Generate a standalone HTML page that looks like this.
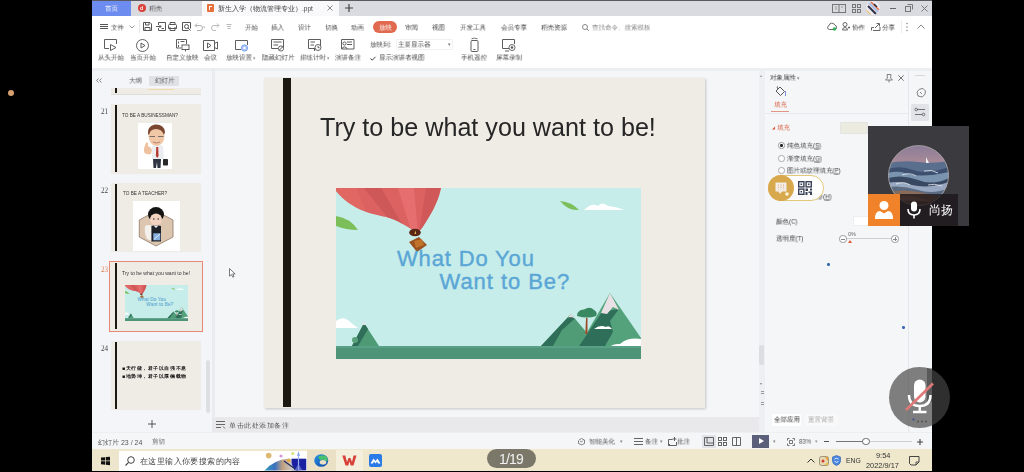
<!DOCTYPE html>
<html><head><meta charset="utf-8">
<style>
*{margin:0;padding:0;box-sizing:border-box}
html,body{width:1024px;height:472px;overflow:hidden;background:#000;font-family:"Liberation Sans",sans-serif;position:relative}
.a{position:absolute}
.t{will-change:transform;position:absolute;white-space:nowrap;line-height:1;color:#444;font-size:6.5px;transform:translateY(-50%)}
svg{position:absolute;overflow:visible}
.s{transform-origin:0 50%;transform:translateY(-50%) scale(0.93)}
.ic{fill:none;stroke:#5e5e5e;stroke-width:1}
</style></head><body>
<div class="a" style="left:8px;top:89.5px;width:6px;height:6px;border-radius:50%;background:#d8a070"></div>

<!-- APP BG -->
<div class="a" style="left:92px;top:0;width:840px;height:470px;background:#f5f6f8"></div>

<!-- ===== TAB BAR ===== -->
<div class="a" style="left:92px;top:0;width:840px;height:16px;background:#dadbe0"></div>
<div class="a" style="left:92px;top:0;width:840px;height:1px;background:#5a5a5e"></div>
<div class="a" style="left:92px;top:1px;width:39px;height:15px;background:#6d8cef"></div>
<div class="t s" style="left:105px;top:9px;color:#fff">首页</div>
<div class="a" style="left:138px;top:4px;width:8px;height:8px;border-radius:50%;background:#d8403a"></div>
<div class="t" style="left:140px;top:8px;color:#fff;font-size:5px;font-weight:bold">d</div>
<div class="t s" style="left:149px;top:9px;color:#555">稻壳</div>
<div class="a" style="left:202px;top:1px;width:137px;height:15px;background:#f9f9fb"></div>
<div class="a" style="left:207px;top:4px;width:7px;height:8px;border-radius:1px;background:#e8703a"></div>
<div class="a" style="left:209px;top:6px;width:3px;height:4px;border-left:1px solid #fff;border-top:1px solid #fff"></div>
<div class="t" style="left:218px;top:9px;color:#444">新生入学（物流管理专业）.ppt</div>
<svg style="left:327px;top:5px" width="6" height="6"><path class="ic" d="M0.5,0.5L5.5,5.5M5.5,0.5L0.5,5.5" style="stroke:#888"/></svg>
<svg style="left:345px;top:4px" width="8" height="8"><path class="ic" d="M4,0V8M0,4H8" style="stroke:#444;stroke-width:1.2"/></svg>
<!-- right window icons -->
<svg style="left:832px;top:4px" width="14" height="9"><rect x="0.5" y="0.5" width="13" height="8" class="ic" style="stroke:#777"/><path class="ic" d="M7,1V8" style="stroke:#777"/><path d="M3,3h2M3,5h2M9,3h2" class="ic" style="stroke:#999"/></svg>
<svg style="left:852px;top:4px" width="9" height="9"><rect x="0.5" y="0.5" width="3" height="3" class="ic" style="stroke:#777"/><rect x="5.5" y="0.5" width="3" height="3" class="ic" style="stroke:#777"/><rect x="0.5" y="5.5" width="3" height="3" class="ic" style="stroke:#777"/><rect x="5.5" y="5.5" width="3" height="3" class="ic" style="stroke:#777"/></svg>
<svg style="left:866px;top:1px" width="14" height="14"><defs><clipPath id="avc"><circle cx="7" cy="7" r="7"/></clipPath></defs><g clip-path="url(#avc)"><rect width="14" height="14" fill="#eceaf0"/><path d="M3,2L12,11" stroke="#a8c0e8" stroke-width="2"/><path d="M5,1L13,9" stroke="#e07050" stroke-width="1.6"/><path d="M2,5L10,13" stroke="#303040" stroke-width="2"/><path d="M8,3L11,6" stroke="#2a2a3a" stroke-width="1.5"/><path d="M0,9L5,14" stroke="#e8c070" stroke-width="1.5"/></g></svg>
<div class="a" style="left:890px;top:8px;width:6px;height:1px;background:#666"></div>
<svg style="left:905px;top:4px" width="8" height="8"><rect x="0.5" y="2.5" width="5" height="5" class="ic" style="stroke:#777"/><path class="ic" d="M2.5,0.5H7.5V5.5" style="stroke:#777"/></svg>
<svg style="left:921px;top:5px" width="7" height="7"><path class="ic" d="M0.5,0.5L6.5,6.5M6.5,0.5L0.5,6.5" style="stroke:#777"/></svg>

<!-- ===== MENU ROW ===== -->
<div class="a" style="left:92px;top:16px;width:840px;height:52px;background:#fff"></div>
<svg style="left:100px;top:24px" width="8" height="6"><path class="ic" d="M0,0.5H8M0,2.5H8M0,4.5H8" style="stroke:#555"/></svg>
<div class="t s" style="left:111px;top:27.5px">文件</div>
<svg style="left:129px;top:25px" width="6" height="4"><path class="ic" d="M0.5,0.5L3,3L5.5,0.5" style="stroke:#999"/></svg>
<div class="a" style="left:139px;top:20px;width:1px;height:13px;background:#e6e6e6"></div>
<svg style="left:143px;top:22px" width="9" height="9"><path class="ic" d="M0.5,0.5H7L8.5,2V8.5H0.5Z M2.5,0.5V3H6V0.5 M2,8.5V5.5H7V8.5" style="stroke:#555"/></svg>
<svg style="left:156px;top:22px" width="10" height="9"><path class="ic" d="M2.5,3V0.5H9.5V8.5H2.5V6 M0,4.5H5M3.5,3L5,4.5L3.5,6 M5.5,6.5H8" style="stroke:#555"/></svg>
<svg style="left:168px;top:22px" width="9" height="9"><path class="ic" d="M2,2.5V0.5H7V2.5 M1.5,2.5H7.5Q8.5,2.5 8.5,3.5V6.5H0.5V3.5Q0.5,2.5 1.5,2.5Z M2,5V8.5H7V5" style="stroke:#555"/></svg>
<svg style="left:182px;top:22px" width="9" height="9"><path class="ic" d="M6.5,8.5H0.5V0.5H8.5V6.5 M6,6L8.5,8.5" style="stroke:#555"/><circle cx="4.5" cy="4.5" r="2" class="ic" style="stroke:#555"/></svg>
<svg style="left:194px;top:22px" width="14" height="9"><path class="ic" d="M1.5,3.5H6A2.5,2.5 0 0 1 6,8.5H3 M3,1.5L1,3.5L3,5.5" style="stroke:#b0b0b0"/><path class="ic" d="M9.5,5H11" style="stroke:#999"/></svg>
<svg style="left:211px;top:22px" width="9" height="9"><path class="ic" d="M7.5,3.5H3A2.5,2.5 0 0 0 3,8.5H5 M6,1.5L8,3.5L6,5.5" style="stroke:#b8b8b8"/></svg>
<svg style="left:226px;top:23px" width="6" height="7"><path class="ic" d="M0.5,1.5H5.5M1,3.5H5M1.5,5.5H4.5" style="stroke:#bbb"/></svg>

<div class="t s" style="left:244.5px;top:27.5px">开始</div>
<div class="t s" style="left:271px;top:27.5px">插入</div>
<div class="t s" style="left:298px;top:27.5px">设计</div>
<div class="t s" style="left:325px;top:27.5px">切换</div>
<div class="t s" style="left:351px;top:27.5px">动画</div>
<div class="a" style="left:373px;top:20.5px;width:24px;height:12px;border-radius:6px;background:#e0694e"></div>
<div class="t s" style="left:378.5px;top:27.5px;color:#fff">放映</div>
<div class="t s" style="left:405px;top:27.5px">审阅</div>
<div class="t s" style="left:431.5px;top:27.5px">视图</div>
<div class="t s" style="left:459.5px;top:27.5px">开发工具</div>
<div class="t s" style="left:501px;top:27.5px">会员专享</div>
<div class="t s" style="left:541px;top:27.5px">稻壳资源</div>
<svg style="left:582px;top:23.5px" width="7" height="7"><circle cx="3" cy="3" r="2.5" class="ic" style="stroke:#888"/><path class="ic" d="M5,5L6.8,6.8" style="stroke:#888"/></svg>
<div class="t s" style="left:591.5px;top:27.5px;color:#888">查找命令、搜索模板</div>

<svg style="left:827px;top:22px" width="10" height="9"><path class="ic" d="M2.5,7.5A2,2 0 0 1 2,3.6A3,3 0 0 1 7.8,3.2A2.2,2.2 0 0 1 8,7.5Z" style="stroke:#666"/><circle cx="7.5" cy="7" r="1.8" fill="#36b05a"/></svg>
<svg style="left:842px;top:22px" width="8" height="9"><circle cx="3" cy="2.5" r="2" class="ic" style="stroke:#666"/><path class="ic" d="M0.5,8A2.5,2.5 0 0 1 5.5,8Z M6,5.5H8M7,4.5V6.5" style="stroke:#666"/></svg>
<div class="t s" style="left:852px;top:27.5px;color:#444">协作</div>
<svg style="left:871px;top:22px" width="10" height="9"><path class="ic" d="M0.5,8.5V5.5H3 M2,8.5H9V5 M4,6L8,2 M5.5,1.5H8.5V4.5" style="stroke:#666"/></svg>
<div class="t s" style="left:882px;top:27.5px;color:#444">分享</div>
<div class="a" style="left:901px;top:20px;width:1px;height:13px;background:#ececec"></div>
<svg style="left:906px;top:22px" width="2" height="10"><circle cx="1" cy="1.5" r="0.7" fill="#777"/><circle cx="1" cy="5" r="0.7" fill="#777"/><circle cx="1" cy="8.5" r="0.7" fill="#777"/></svg>
<svg style="left:917px;top:24px" width="8" height="5"><path class="ic" d="M0.5,4.5L4,1L7.5,4.5" style="stroke:#888"/></svg>

<!-- ===== RIBBON ===== -->
<!-- 从头开始 -->
<svg style="left:104px;top:39px" width="14" height="12"><path class="ic" d="M5,9.5H0.5V0.5H12.5V5" /><path class="ic" d="M6.5,5.5V11.5L12,8.5Z"/><path class="ic" d="M2.5,9.5H4.5" /></svg>
<div class="t s" style="left:98px;top:58.3px">从头开始</div>
<!-- 当页开始 -->
<svg style="left:136px;top:38.5px" width="13" height="13"><circle cx="6.5" cy="6.5" r="6" class="ic"/><path class="ic" d="M5,4V9L9,6.5Z"/></svg>
<div class="t s" style="left:129.5px;top:58.3px">当页开始</div>
<!-- 自定义放映 -->
<svg style="left:175.5px;top:39px" width="14" height="13"><path class="ic" d="M5,9H0.5V0.5H10.5V5 M2.5,2.5V4.5M2.5,6V8 M4.5,2.5H8.5"/><rect x="6" y="6" width="7" height="4.5" class="ic"/><path class="ic" d="M9.5,10.5V12.5"/></svg>
<div class="t s" style="left:165.5px;top:58.3px">自定义放映</div>
<!-- 会议 -->
<svg style="left:203px;top:40px" width="15" height="11"><path class="ic" d="M0.5,0.5H11.5V10.5H0.5Z M11.5,3.5L14.5,2V9L11.5,7.5"/><path class="ic" d="M4.5,3V8L8,5.5Z"/></svg>
<div class="t s" style="left:203.5px;top:58.3px">会议</div>
<!-- 放映设置 -->
<svg style="left:234.5px;top:39.5px" width="14" height="13"><path class="ic" d="M6,9.5H0.5V0.5H12.5V5"/><circle cx="9.5" cy="8" r="3.2" fill="#a8c4f4" stroke="#6a96e8" stroke-width="0.7"/><circle cx="9.5" cy="8" r="1.2" fill="#fff"/></svg>
<div class="t s" style="left:226px;top:58.3px">放映设置<span style="font-size:5px;color:#888"> ▾</span></div>
<!-- 隐藏幻灯片 -->
<svg style="left:270.5px;top:38.5px" width="14" height="13"><path class="ic" d="M0.5,0.5H12.5V9.5H0.5Z M2.5,3H10.5 M2.5,6H7"/><circle cx="10" cy="9.5" r="2.6" fill="#fff" stroke="#555" stroke-width="0.9"/><path class="ic" d="M8.3,11.2L11.7,7.8"/></svg>
<div class="t s" style="left:261.5px;top:58.3px">隐藏幻灯片</div>
<!-- 排练计时 -->
<svg style="left:308px;top:38.5px" width="14" height="13"><path class="ic" d="M0.5,0.5H12.5V9.5H0.5Z M2.5,3H7 M2.5,6H6 M6.5,9.5V12"/><circle cx="10" cy="8.5" r="3" fill="#fff" stroke="#555" stroke-width="0.9"/><path class="ic" d="M10,7V8.7H11.5"/></svg>
<div class="t s" style="left:299.5px;top:58.3px">排练计时<span style="font-size:5px;color:#888"> ▾</span></div>
<!-- 演讲备注 -->
<svg style="left:341px;top:38.5px" width="14" height="13"><path class="ic" d="M0.5,0.5H13V10H0.5Z M6,3H11M6,5.5H11"/><circle cx="3.5" cy="4.5" r="1.6" class="ic"/><path class="ic" d="M0.8,10A2.8,2.8 0 0 1 6.2,10"/></svg>
<div class="t s" style="left:335px;top:58.3px">演讲备注</div>
<!-- 放映到 -->
<div class="t s" style="left:369.5px;top:44.5px">放映到:</div>
<div class="a" style="left:396px;top:38.5px;width:57px;height:11px;border:1px solid #f1f1f1;border-radius:1px;background:#fff"></div>
<div class="t s" style="left:398px;top:44.5px">主要显示器</div>
<div class="t" style="left:447.5px;top:44.5px;font-size:4.5px;color:#777">▾</div>
<svg style="left:370px;top:56px" width="6" height="5"><path class="ic" d="M0.5,2.5L2.2,4.2L5.5,0.8" style="stroke:#444"/></svg>
<div class="t s" style="left:378.5px;top:58.3px">显示演讲者视图</div>
<!-- 手机遥控 -->
<svg style="left:469.5px;top:37.5px" width="9" height="14"><path class="ic" d="M1.5,0.8Q4.5,-0.5 7.5,0.8" style="stroke:#777"/><rect x="1" y="2.5" width="7" height="11" rx="1" class="ic"/><path class="ic" d="M3.5,11.5H5.5"/></svg>
<div class="t s" style="left:461px;top:58.3px">手机遥控</div>
<!-- 屏幕录制 -->
<svg style="left:502px;top:38.5px" width="14" height="13"><path class="ic" d="M7,9.5H0.5V0.5H12.5V5 M3,12H7"/><circle cx="10" cy="8.5" r="3" fill="#fff" stroke="#555" stroke-width="0.9"/><circle cx="10" cy="8.5" r="1.2" fill="#555"/></svg>
<div class="t s" style="left:496px;top:58.3px">屏幕录制</div>


<!-- ===== BODY AREAS ===== -->
<div class="a" style="left:92px;top:68px;width:840px;height:2.5px;background:#eceef1"></div>
<div class="a" style="left:92px;top:70.5px;width:119px;height:361.5px;background:#f4f5f8"></div>
<div class="a" style="left:211.5px;top:68px;width:3px;height:364px;background:#eaebee"></div>
<div class="a" style="left:214.5px;top:70.5px;width:544.5px;height:361.5px;background:#f5f6f8"></div>
<div class="a" style="left:759px;top:70.5px;width:6px;height:361.5px;background:#eeeff2"></div>
<div class="t" style="left:759.5px;top:76px;font-size:4px;color:#999">▴</div>
<div class="a" style="left:758.7px;top:345.3px;width:5.7px;height:20px;background:#dcdde3;border-radius:2px"></div>
<div class="t" style="left:760px;top:383.5px;font-size:4px;color:#888">▾</div>
<div class="a" style="left:760.5px;top:391px;width:3px;height:0.6px;background:#999"></div><div class="a" style="left:760.5px;top:393px;width:3px;height:0.6px;background:#999"></div>
<div class="a" style="left:760.5px;top:401.5px;width:3px;height:0.6px;background:#999"></div><div class="a" style="left:760.5px;top:403.5px;width:3px;height:0.6px;background:#999"></div>
<div class="a" style="left:765px;top:70.5px;width:143px;height:361.5px;background:#f5f6f8"></div>
<div class="a" style="left:908px;top:70.5px;width:1px;height:361.5px;background:#e6e7ea"></div>
<div class="a" style="left:909px;top:70.5px;width:23px;height:361.5px;background:#f5f6f8"></div>

<!-- ===== LEFT PANEL ===== -->
<svg style="left:96px;top:77.5px" width="6" height="5"><path class="ic" d="M2.5,0.5L0.5,2.5L2.5,4.5M5.5,0.5L3.5,2.5L5.5,4.5" style="stroke:#666;stroke-width:0.8"/></svg>
<div class="t s" style="left:129px;top:80.5px;color:#555">大纲</div>
<div class="a" style="left:148.5px;top:75.5px;width:30.5px;height:10.5px;background:#dfe1e7;border-radius:1px"></div>
<div class="t s" style="left:154.5px;top:80.5px;color:#555">幻灯片</div>
<!-- thumb 20 (bottom sliver) -->
<div class="a" style="left:111px;top:88px;width:90px;height:6.5px;background:#efece5;border-bottom:1px solid #e0ded8"></div>
<div class="a" style="left:115px;top:88px;width:2px;height:5px;background:#1a1a12"></div>
<div class="a" style="left:148px;top:88.5px;width:26px;height:1.2px;background:#f0d8a8"></div>
<!-- thumb 21 -->
<div class="t" style="left:100.5px;top:112.8px;color:#444;font-size:7.2px;font-family:'Liberation Serif',serif">21</div>
<div class="a" style="left:111px;top:103.5px;width:90px;height:70px;background:#efece6;box-shadow:0 0 0.5px rgba(0,0,0,.2)"></div>
<div class="a" style="left:115px;top:104.5px;width:2px;height:67.5px;background:#1a1a12"></div>
<div class="t" style="left:122px;top:116px;color:#333;font-size:4.7px">TO BE A BUSINESSMAN?</div>
<div class="a" style="left:138px;top:122.5px;width:33.5px;height:46px;background:#fff"></div>
<svg style="left:138px;top:122.5px" width="34" height="46">
 <path d="M14,23Q19,21 25,23L26,36H14Z" fill="#ecedf0"/>
 <path d="M18.3,24H20.2L20.6,33L19.2,35L17.9,33Z" fill="#b83a34"/>
 <path d="M6.5,30Q5,26 7.5,21Q8.5,18 10,20L10,23Q13,24 14,27L13,31Q9,32 6.5,30Z" fill="#eec2a0"/>
 <ellipse cx="18.5" cy="13" rx="8" ry="10" fill="#f0c8a8"/>
 <path d="M10,11Q9,3 17,1.5Q26,1 27,9L26,12Q24,6 18,6Q12,6 11,12Z" fill="#7a4630"/>
 <path d="M11.5,13.5H17M20,13.5H25.5" stroke="#555" stroke-width="0.8"/>
 <path d="M15,19Q18.5,21 22,19" stroke="#a06050" stroke-width="0.7" fill="none"/>
 <path d="M15,36H23L22.5,45H19.5L19,39L18,45H15.5Z" fill="#2e3442"/>
 <rect x="25" y="36" width="5" height="6.5" rx="0.8" fill="#2a2a2a"/>
</svg>
<!-- thumb 22 -->
<div class="t" style="left:100.5px;top:191.8px;color:#444;font-size:7.2px;font-family:'Liberation Serif',serif">22</div>
<div class="a" style="left:111px;top:183px;width:90px;height:69px;background:#efece6;box-shadow:0 0 0.5px rgba(0,0,0,.2)"></div>
<div class="a" style="left:115px;top:184px;width:2px;height:67px;background:#1a1a12"></div>
<div class="t" style="left:122.5px;top:194px;color:#333;font-size:4.7px">TO BE A TEACHER?</div>
<div class="a" style="left:133px;top:200.5px;width:47px;height:50px;background:#fff"></div>
<svg style="left:133px;top:200.5px" width="47" height="50">
 <path d="M23,10L40,19V36L23,45L6.3,36V19Z" fill="#dcc6b0" stroke="#8e7866" stroke-width="0.8"/>
 <path d="M12,25Q16,23 19,25L19,40L14,38Q11,32 12,25Z" fill="#f4f0ec"/>
 <ellipse cx="23" cy="13.5" rx="8" ry="7.5" fill="#141414"/>
 <ellipse cx="23" cy="18.5" rx="6" ry="6" fill="#f2d2c0"/>
 <path d="M16.5,16Q17,9 23,9Q29,9 29.5,16Q27,11 23,11.5Q19,11 16.5,16Z" fill="#141414"/>
 <circle cx="20.8" cy="18" r="0.8" fill="#333"/><circle cx="25.2" cy="18" r="0.8" fill="#333"/>
 <path d="M18.4,25Q23,23.5 28,25V40.5H18.4Z" fill="#1e2228"/>
 <path d="M20.5,24.5L23,27L25.5,24.5Z" fill="#f4f4f4"/>
 <rect x="20.3" y="32.3" width="7" height="7" fill="#86b0e0"/>
 <path d="M21,38.5L27,33" stroke="#fff" stroke-width="0.8"/>
</svg>
<!-- thumb 23 selected -->
<div class="t" style="left:100.5px;top:270.8px;color:#e07a50;font-size:7.2px;font-family:'Liberation Serif',serif">23</div>
<div class="a" style="left:109px;top:261px;width:94px;height:71px;border:1px solid #e58a74;background:#efece6"></div>
<div class="a" style="left:115px;top:263px;width:2px;height:66px;background:#1a1a12"></div>
<div class="t" style="left:122px;top:273.5px;color:#333;font-size:5.1px">Try to be what you want to be!</div>
<svg style="left:125px;top:284.5px" width="63" height="36" viewBox="0 0 305 171" preserveAspectRatio="none"><use href="#pic"/></svg>
<!-- thumb 24 -->
<div class="t" style="left:100.5px;top:349.8px;color:#444;font-size:7.2px;font-family:'Liberation Serif',serif">24</div>
<div class="a" style="left:111px;top:340.5px;width:90px;height:69.5px;background:#efece6;box-shadow:0 0 0.5px rgba(0,0,0,.2)"></div>
<div class="a" style="left:115px;top:342px;width:2px;height:66.5px;background:#1a1a12"></div>
<div class="t" style="left:122px;top:368px;color:#111;font-size:5px;letter-spacing:0.55px;font-weight:bold;font-family:'Liberation Serif',serif">■天行健，君子以自强不息</div>
<div class="t" style="left:122px;top:376px;color:#111;font-size:5px;letter-spacing:0.55px;font-weight:bold;font-family:'Liberation Serif',serif">■地势坤，君子以厚德载物</div>
<!-- left scrollbar -->
<div class="a" style="left:205.5px;top:360px;width:4.5px;height:53px;background:#dedfe2;border-radius:2px"></div>
<svg style="left:148px;top:419.5px" width="8" height="8"><path class="ic" d="M4,0V8M0,4H8" style="stroke:#555;stroke-width:1"/></svg>

<!-- ===== SLIDE ===== -->
<div class="a" style="left:264px;top:77.5px;width:441px;height:330.5px;background:#efece6;box-shadow:0.5px 0.5px 2.5px rgba(0,0,0,.2)"></div>
<div class="a" style="left:283px;top:78px;width:8px;height:328.5px;background:#1a1a10"></div>
<div class="t" style="left:319.5px;top:127.5px;font-size:25.15px;color:#262626;transform:none;top:114.5px">Try to be what you want to be!</div>
<svg style="left:335.5px;top:187.5px" width="305" height="171" viewBox="0 0 305 171">
 <defs>
  <g id="pic">
   <rect x="0" y="0" width="305" height="171" fill="#c6ede9"/>
   <!-- balloon -->
   <clipPath id="bcl"><path d="M0,0H105C102,15 94,28 86,40Q83,44 80,44C70,38 62,32 50,29C35,26 16,22 0,3Z"/></clipPath>
   <g clip-path="url(#bcl)">
   <rect x="0" y="0" width="106" height="46" fill="#dc6262"/>
   <path d="M0,0H20L40,46H0Z" fill="#e26a62" opacity="0.6"/>
   <path d="M28,0L52,30L72,46L45,0Z" fill="#c85252" opacity="0.7"/>
   <path d="M62,0L76,46H82L78,0Z" fill="#e87272" opacity="0.8"/>
   <path d="M90,0L83,46L106,46V0Z" fill="#cc5454" opacity="0.7"/>
   </g>
   <ellipse cx="79" cy="44.5" rx="5.8" ry="3.8" fill="#5a2616"/><path d="M78.5,46L79.3,42.5L80.2,46Z" fill="#f0c050"/>
   <path d="M73,54L83,49L91,57L81,64Z" fill="#9a5220"/>
   <path d="M78,53L86,51L88,57L80,60Z" fill="#d08030" opacity="0.7"/>
   <!-- leaves -->
   <path d="M0,28Q14,30 22,42Q10,42 0,38Z" fill="#7cbf5a"/>
   <path d="M224,13Q236,14 243,22Q232,23 224,13Z" fill="#7cbf5a"/>
   <path d="M248,22Q256,14 262,18Q266,13 272,18Q282,19 288,22Z" fill="#ffffff"/>
   <!-- text -->
   <text x="61" y="77.5" font-family="Liberation Sans" font-size="22" fill="#5aa6d6" stroke="#5aa6d6" stroke-width="0.4" letter-spacing="0.85">What Do You</text>
   <text x="103.5" y="101" font-family="Liberation Sans" font-size="22" fill="#5aa6d6" stroke="#5aa6d6" stroke-width="0.4" letter-spacing="0.95">Want to Be?</text>
   <!-- left bottom -->
   <path d="M0,133Q6,128 12,132Q16,136 22,140H0Z" fill="#ffffff"/>
   <path d="M16,158L28,135L43,158Z" fill="#4d9a74"/>
   <path d="M16,158L28,135L32,141L22,158Z" fill="#2f6e58"/>
   <path d="M26,137L28,133L30,137Z" fill="#e0e4e8"/>
   <circle cx="19" cy="152" r="3" fill="#5aa07a"/>
   <!-- right mountains -->
   <path d="M205,158L235,126L262,158Z" fill="#4f9c76"/>
   <path d="M205,158L235,126L238.5,131L226,142L217,158Z" fill="#2f6e58"/>
   <path d="M232,129.5L235,125.5L238.5,130.5L235.5,129Z" fill="#e6dfe3"/>
   <path d="M243,158L274,105L305,150V158Z" fill="#54a27b"/>
   <path d="M243,158L266,124L283,121L274,133L277,144L269,158Z" fill="#2f6e58"/>
   <path d="M265,125L274,105L283,122L277,119L271,126Z" fill="#e8e0e4"/>
   <!-- tree -->
   <path d="M249.3,146L250,130L251.5,130L251.5,146Z" fill="#a04a2a"/>
   
   <path d="M241,128Q241,122 248,121.5Q254,118 258,122Q262,124 260,128Q252,131 241,128Z" fill="#3a8862"/>
   <path d="M258,141Q264,136 270,139Q273,137 276,141Z" fill="#ffffff"/>
   <path d="M268,165Q274,155 284,156Q292,149 305,151V165Z" fill="#ffffff"/>
<!-- ground -->
   <rect x="0" y="158" width="305" height="13" fill="#4d9479"/>
   <rect x="0" y="158" width="305" height="2" fill="#5aa086"/>
  </g>
 </defs>
 <use href="#pic"/>
</svg>

<svg style="left:229px;top:268px" width="8" height="11"><path d="M0.5,0.5V8.1L2.4,6.5L3.8,9.2L5,8.6L3.7,5.9H6.1Z" fill="#fff" stroke="#444" stroke-width="0.7" stroke-linejoin="round"/></svg>
<!-- notes bar -->
<div class="a" style="left:212px;top:417px;width:547px;height:15px;background:#e9e9eb"></div>
<svg style="left:215.8px;top:420.5px" width="10" height="8"><path class="ic" d="M0,0.5H9M0,3.5H9M0,6.5H5M7,5.5L9,7.5" style="stroke:#666"/></svg>
<div class="t" style="left:229px;top:424.5px;color:#555;font-size:7px;letter-spacing:0.55px">单击此处添加备注</div>


<!-- ===== RIGHT PANEL ===== -->
<div class="t s" style="left:769.5px;top:77.5px;color:#444">对象属性<span style="font-size:4.5px;color:#777"> ▾</span></div>
<svg style="left:884.5px;top:73.5px" width="8" height="9"><path class="ic" d="M2,0.5H6L5.5,4L7.5,6H0.5L2.5,4Z M4,6V8.5" style="stroke:#666;stroke-width:0.8"/></svg>
<svg style="left:898px;top:74.5px" width="6" height="6"><path class="ic" d="M0.3,0.3L5.7,5.7M5.7,0.3L0.3,5.7" style="stroke:#666;stroke-width:0.9"/></svg>
<svg style="left:774.5px;top:86px" width="12" height="11"><path class="ic" d="M1,5L5,1L9.5,5.5L5.5,9.5Z M3,3Q1,1 3,0.5" style="stroke:#444;stroke-width:0.9"/><path d="M10.5,5V10" stroke="#8090d8" stroke-width="1"/></svg>
<div class="t s" style="left:773.5px;top:105px;color:#d65a3a">填充</div>
<div class="a" style="left:771px;top:111.2px;width:17.5px;height:0.8px;background:#e49484"></div>
<div class="a" style="left:765px;top:112.5px;width:143px;height:1px;background:#e8e9ec"></div>
<div class="t" style="left:772px;top:127.5px;color:#d65a3a;font-size:4px">◢</div>
<div class="t s" style="left:777px;top:128px;color:#d65a3a">填充</div>
<div class="a" style="left:839.5px;top:122px;width:28px;height:12px;background:#ecebe0;border:1px solid #e4e4e4"></div>
<div class="a" style="left:778px;top:142px;width:6.5px;height:6.5px;border-radius:50%;border:0.8px solid #999;background:#fff"></div>
<div class="a" style="left:779.9px;top:143.9px;width:2.7px;height:2.7px;border-radius:50%;background:#222"></div>
<div class="t s" style="left:786.5px;top:145.5px;color:#444">纯色填充(<u>S</u>)</div>
<div class="a" style="left:778px;top:155px;width:6.5px;height:6.5px;border-radius:50%;border:0.8px solid #aaa;background:#fff"></div>
<div class="t s" style="left:786.5px;top:158.5px;color:#444">渐变填充(<u>G</u>)</div>
<div class="a" style="left:778px;top:167px;width:6.5px;height:6.5px;border-radius:50%;border:0.8px solid #aaa;background:#fff"></div>
<div class="t s" style="left:786.5px;top:170.5px;color:#444">图片或纹理填充(<u>P</u>)</div>
<div class="t s" style="left:783.5px;top:197px;color:#444">隐藏背景图形(<u>H</u>)</div>
<div class="t s" style="left:776px;top:222px;color:#444">颜色(C)</div>
<div class="a" style="left:852.5px;top:215.5px;width:20px;height:10px;background:#fff;border:0.5px solid #eee"></div>
<div class="t s" style="left:776px;top:239px;color:#444">透明度(T)</div>
<div class="a" style="left:839px;top:235px;width:7.5px;height:7.5px;border-radius:50%;border:0.8px solid #999;background:#fff"></div>
<div class="a" style="left:840.8px;top:238.5px;width:4px;height:0.7px;background:#888"></div>
<div class="a" style="left:846.5px;top:238.3px;width:44.5px;height:0.8px;background:#cfcfcf"></div>
<div class="a" style="left:891px;top:235px;width:7.5px;height:7.5px;border-radius:50%;border:0.8px solid #999;background:#fff"></div>
<div class="a" style="left:892.8px;top:238.5px;width:4px;height:0.7px;background:#888"></div>
<div class="a" style="left:894.5px;top:236.8px;width:0.7px;height:4px;background:#888"></div>
<div class="t" style="left:847.5px;top:234.5px;color:#666;font-size:5.5px">0%</div>
<div class="a" style="left:847.5px;top:239.5px;width:0;height:0;border-left:2px solid transparent;border-right:2px solid transparent;border-bottom:3px solid #e05a3a"></div>
<div class="a" style="left:827px;top:263px;width:2.5px;height:2.5px;border-radius:50%;background:#3a6ab0"></div>
<div class="a" style="left:902px;top:326px;width:2.5px;height:2.5px;border-radius:50%;background:#3a6ab0"></div>
<div class="a" style="left:771.5px;top:414px;width:29px;height:12px;background:#fff;border-radius:1px"></div>
<div class="t s" style="left:774px;top:420px;color:#333">全部应用</div>
<div class="a" style="left:805px;top:414px;width:33px;height:12px;background:#f9f9fa;border-radius:1px"></div>
<div class="t s" style="left:808px;top:420px;color:#aaa">重置背景</div>
<!-- right toolbar -->
<div class="a" style="left:915px;top:75px;width:10px;height:1px;background:#d8d8dc"></div>
<svg style="left:915.5px;top:86.5px" width="11" height="11"><path class="ic" d="M1,5Q3,1 7,1.5L9.5,4Q10,8 6,10L2,9Z M4,5L6,7" style="stroke:#666;stroke-width:0.8"/></svg>
<div class="a" style="left:911px;top:103.5px;width:17.5px;height:17px;background:#e2e3e8;border-radius:1.5px"></div>
<svg style="left:914px;top:107px" width="12" height="10"><path class="ic" d="M3,2.5H11M1,7.5H8" style="stroke:#555;stroke-width:0.8"/><circle cx="2.2" cy="2.5" r="1.3" class="ic" style="stroke:#555;stroke-width:0.8"/><circle cx="9.5" cy="7.5" r="1.3" class="ic" style="stroke:#555;stroke-width:0.8"/></svg>

<!-- ===== STATUS BAR ===== -->
<div class="a" style="left:92px;top:432px;width:840px;height:17.5px;background:#f5f6f8;border-top:0.5px solid #eeeff1"></div>
<div class="t" style="left:97.5px;top:441.5px;color:#555;font-size:7px">幻灯片 23 / 24</div>
<div class="t s" style="left:152px;top:441.5px;color:#555">剪切</div>
<svg style="left:578px;top:437.5px" width="7" height="7"><path class="ic" d="M1,2L3.5,0.5L6.5,2V5.5L3.5,6.8L0.5,5.5V2.5 M2,3L3.5,4L5,2.5" style="stroke:#666;stroke-width:0.8"/></svg>
<div class="t s" style="left:588.5px;top:441.5px;color:#555">智能美化</div>
<div class="t" style="left:619.5px;top:441.5px;color:#888;font-size:4.5px">▾</div>
<svg style="left:634px;top:438px" width="10" height="7"><path class="ic" d="M0,0.5H9M0,3.5H9M0,6.5H9" style="stroke:#555;stroke-width:0.9"/></svg>
<div class="t s" style="left:644.5px;top:441.5px;color:#555">备注</div>
<div class="t" style="left:660px;top:441.5px;color:#888;font-size:4.5px">▾</div>
<svg style="left:667.5px;top:436.5px" width="9" height="9"><path class="ic" d="M0.5,2.5H4.5M0.5,2.5V8.5H8.5V5 M6.5,0V4M4.5,2H8.5 M0.5,8.5L2,7" style="stroke:#555;stroke-width:0.9"/></svg>
<div class="t s" style="left:677px;top:441.5px;color:#555">批注</div>
<div class="a" style="left:701.5px;top:434.5px;width:14px;height:13px;background:#e2e3e8"></div>
<svg style="left:703.5px;top:436.5px" width="10" height="9"><path class="ic" d="M0.5,0.5H9.5V8.5H0.5Z M3,0.5V6H9.5" style="stroke:#555;stroke-width:0.9"/></svg>
<svg style="left:717.5px;top:436.5px" width="9" height="9"><rect x="0.5" y="0.5" width="3" height="3" class="ic" style="stroke:#555;stroke-width:0.9"/><rect x="5.5" y="0.5" width="3" height="3" class="ic" style="stroke:#555;stroke-width:0.9"/><rect x="0.5" y="5.5" width="3" height="3" class="ic" style="stroke:#555;stroke-width:0.9"/><rect x="5.5" y="5.5" width="3" height="3" class="ic" style="stroke:#555;stroke-width:0.9"/></svg>
<svg style="left:731.5px;top:436.5px" width="9" height="9"><path class="ic" d="M0.5,0.5H8.5V8.5H0.5Z M4.5,0.5V8.5" style="stroke:#555;stroke-width:0.9"/></svg>
<div class="a" style="left:752px;top:434.5px;width:17px;height:13px;background:#5b5f7a"></div>
<div class="a" style="left:758.5px;top:437.5px;width:0;height:0;border-top:3.5px solid transparent;border-bottom:3.5px solid transparent;border-left:5px solid #fff"></div>
<div class="t" style="left:772.5px;top:441.5px;color:#888;font-size:4.5px">▾</div>
<svg style="left:787px;top:437.5px" width="8" height="8"><path class="ic" d="M0.5,2.5V0.5H2.5M5.5,0.5H7.5V2.5M7.5,5.5V7.5H5.5M2.5,7.5H0.5V5.5 M2.5,2.5H5.5V5.5H2.5Z" style="stroke:#555;stroke-width:0.8"/></svg>
<div class="t s" style="left:799px;top:441.5px;color:#555">83%</div>
<div class="t" style="left:814.5px;top:441.5px;color:#999;font-size:4.5px">▾</div>
<div class="a" style="left:824px;top:441px;width:5px;height:1.2px;background:#555"></div>
<div class="a" style="left:835.5px;top:441.2px;width:76px;height:0.8px;background:#cfcfcf"></div>
<div class="a" style="left:835.5px;top:441px;width:27px;height:1px;background:#777"></div>
<div class="a" style="left:862px;top:437.5px;width:7.5px;height:7.5px;border-radius:50%;border:1px solid #666;background:#fff"></div>
<svg style="left:917px;top:438.5px" width="6" height="6"><path d="M3,0V6M0,3H6" stroke="#444" stroke-width="1.1"/></svg>

<!-- ===== TASKBAR ===== -->
<div class="a" style="left:92px;top:448.5px;width:840px;height:22px;background:#efe8cc"></div>
<div class="a" style="left:92px;top:470.5px;width:840px;height:2px;background:#000"></div>
<div class="a" style="left:92px;top:448.5px;width:26.5px;height:22px;background:#ede6cc"></div>
<svg style="left:100.8px;top:456.7px" width="9" height="8"><path d="M0,0.6L4.1,0.2V3.6H0Z M4.8,0.1L9,-0.3V3.6H4.8Z M0,4.3H4.1V7.7L0,7.3Z M4.8,4.3H9V8.2L4.8,7.8Z" fill="#111"/></svg>
<div class="a" style="left:118.5px;top:450.5px;width:188px;height:20px;background:#fff"></div>
<svg style="left:124.5px;top:455.5px" width="10" height="10"><circle cx="6" cy="4" r="3.3" class="ic" style="stroke:#444;stroke-width:1"/><path class="ic" d="M3.6,6.4L0.5,9.5" style="stroke:#444;stroke-width:1.1"/></svg>
<div class="t" style="left:139.5px;top:461.5px;color:#444;font-size:8px;letter-spacing:0.4px">在这里输入你要搜索的内容</div>
<svg style="left:258px;top:448px" width="50" height="23"><defs><linearGradient id="pl" x1="0" y1="0" x2="1" y2="0"><stop offset="0" stop-color="#38a0b8"/><stop offset="0.35" stop-color="#3a70c0"/><stop offset="0.6" stop-color="#c0a080"/><stop offset="1" stop-color="#d0d4e0"/></linearGradient><clipPath id="sb"><rect x="0" y="2.5" width="48.5" height="20"/></clipPath></defs>
<g clip-path="url(#sb)">
<circle cx="10.7" cy="7.6" r="2.8" fill="#dcb870"/>
<circle cx="23" cy="8" r="1.6" fill="#d898d8"/>
<circle cx="34.7" cy="5.5" r="1.5" fill="#d8e070"/>
<rect x="33.5" y="10.7" width="15" height="12" fill="#1a20a0"/>
<path d="M6,23Q15,12 31,10.5L37,23Z" fill="url(#pl)"/>
<path d="M26,13L40,23" stroke="#222a60" stroke-width="1.2"/>
<circle cx="31" cy="12.5" r="2" fill="#e0b050"/>
<path d="M40.5,3L42,8H39Z" fill="#8aa0f0"/><path d="M40.5,7V23" stroke="#a0b4f8" stroke-width="1.2"/><path d="M36,23L40.5,16L45,23" fill="#8090e0" opacity="0.6"/>
</g></svg>
<div class="a" style="left:306.5px;top:449.5px;width:29px;height:21px;background:#e9e0c6"></div>
<svg style="left:313.5px;top:454px" width="15" height="13"><defs><linearGradient id="edg" x1="0" y1="0" x2="1" y2="1"><stop offset="0" stop-color="#2a9ae0"/><stop offset="0.5" stop-color="#1a6ac8"/><stop offset="1" stop-color="#0a4aa0"/></linearGradient></defs>
<ellipse cx="7.25" cy="6.5" rx="7" ry="6.3" fill="url(#edg)"/><path d="M4,3Q8,0 12.5,2.5Q14.5,5 13.5,7.5Q10,5 6,6Z" fill="#48c070"/><ellipse cx="9" cy="8.3" rx="3.3" ry="2.3" fill="#e9e0c6"/></svg>
<div class="a" style="left:335.5px;top:449.5px;width:27px;height:21px;background:#f4efdc"></div>
<svg style="left:341.5px;top:455px" width="15" height="11"><path d="M0.3,0.5H3.3L5,7L6.5,3H8.5L10,7L11.5,0.5H14.5L11.5,10.5H8.7L7.5,6.5L6.3,10.5H3.5Z" fill="#d8403a"/></svg>
<div class="a" style="left:369px;top:454px;width:12.5px;height:12.5px;border-radius:2px;background:#2a7ae8"></div>
<svg style="left:370px;top:457px" width="11" height="7"><path d="M0.5,6.5L3.5,1.5L5.5,4L7.5,1.5L10.5,6.5H8L7,4.5L5.5,6.5L4,4.5L3,6.5Z" fill="#fff"/></svg>
<!-- 1/19 pill -->
<div class="a" style="left:487px;top:448.5px;width:49px;height:19.5px;border-radius:10px;background:rgba(110,106,94,0.9)"></div>
<div class="t" style="left:499px;top:458.8px;color:#f2f2f2;font-size:14px;letter-spacing:-0.8px">1/19</div>
<!-- tray -->
<svg style="left:806.5px;top:458px" width="8" height="5"><path class="ic" d="M0.5,4.5L4,1L7.5,4.5" style="stroke:#333;stroke-width:1"/></svg>
<svg style="left:818.5px;top:455.5px" width="10" height="10"><rect x="0.5" y="0.5" width="9" height="9" rx="2" fill="#e8d8b0" stroke="#8a8070" stroke-width="0.8"/><path d="M6,1H9V5Z" fill="#e8a030"/><circle cx="4" cy="5" r="1.5" fill="#d04030"/><path d="M5,9L9,6V9Z" fill="#e8c050"/></svg>
<svg style="left:832px;top:455px" width="9" height="11"><path d="M4.5,0.5L8.5,2V6Q8.5,9 4.5,10.5Q0.5,9 0.5,6V2Z" fill="#4a88e0" stroke="#2a5ab0" stroke-width="0.6"/><path d="M2.5,4Q4.5,2.5 6.5,4M2.5,6.5Q4.5,8 6.5,6.5" stroke="#fff" stroke-width="0.8" fill="none"/></svg>
<div class="t" style="left:846px;top:461px;color:#333;font-size:6.8px">ENG</div>
<div class="t" style="left:875.5px;top:455.5px;color:#333;font-size:7.4px">9:54</div>
<div class="t" style="left:866px;top:465.5px;color:#333;font-size:7.4px">2022/9/17</div>
<svg style="left:909px;top:456px" width="11" height="10"><path class="ic" d="M0.5,0.5H10V6L7,9H2L0.5,7.5Z" style="stroke:#333;stroke-width:0.9"/><path d="M7,9V6H10" class="ic" style="stroke:#333;stroke-width:0.8"/></svg>

<!-- ===== OVERLAYS ===== -->
<!-- gold pill -->
<div class="a" style="left:768px;top:175px;width:56px;height:26px;border-radius:13px;background:rgba(255,255,255,0.92);border:1.2px solid #e2c878"></div>
<div class="a" style="left:768px;top:175px;width:26px;height:26px;border-radius:50%;background:#d8a84c"></div>
<svg style="left:773px;top:180px" width="17" height="17"><path d="M2.5,2.5H13.5V11.5H9L7,14L5.5,11.5H2.5Z" fill="#f4ece6"/><path d="M5.5,4.5V9.5M8,4.5V9.5M10.5,4.5V9.5" stroke="#d8b890" stroke-width="1" stroke-dasharray="1.2,1"/><circle cx="14" cy="14" r="1.8" fill="#fff4d8"/></svg>
<svg style="left:798px;top:181px" width="15" height="14"><rect x="0.7" y="0.7" width="5.2" height="5.2" fill="none" stroke="#3a4258" stroke-width="1.4"/><rect x="8.1" y="0.7" width="5.2" height="5.2" fill="none" stroke="#3a4258" stroke-width="1.4"/><rect x="0.7" y="8.1" width="5.2" height="5.2" fill="none" stroke="#3a4258" stroke-width="1.4"/><rect x="2.5" y="2.5" width="1.6" height="1.6" fill="#3a4258"/><rect x="9.9" y="2.5" width="1.6" height="1.6" fill="#3a4258"/><rect x="2.5" y="9.9" width="1.6" height="1.6" fill="#3a4258"/><path d="M7.5,7.5H10V10H7.5Z M10.5,10.5H14V14H12V12H10.5Z M12,7.5H14V9.5H12Z M7.5,11H9.5V14H7.5Z" fill="#3a4258"/></svg>
<!-- video tile -->
<div class="a" style="left:868px;top:126px;width:100.5px;height:100px;background:#3a3a3f"></div>
<svg style="left:887.5px;top:144.5px" width="61" height="61"><defs><clipPath id="ph"><circle cx="30.5" cy="30.5" r="30"/></clipPath>
<linearGradient id="sky" x1="0" y1="0" x2="0" y2="1"><stop offset="0" stop-color="#8a7c98"/><stop offset="0.6" stop-color="#c89a98"/><stop offset="1" stop-color="#d8b0a0"/></linearGradient></defs>
<g clip-path="url(#ph)">
<rect width="61" height="61" fill="url(#sky)"/>
<path d="M0,18Q15,15 30,17T61,16V61H0Z" fill="#5a6e8e"/>
<path d="M0,24Q12,20 25,25T61,22V61H0Z" fill="#3e5070"/>
<path d="M0,28Q10,25 20,29Q35,33 61,27V61H0Z" fill="#7a94b0"/>
<path d="M0,33Q15,29 30,35T61,33V61H0Z" fill="#384860"/>
<path d="M0,38Q12,35 24,40Q40,44 61,37V61H0Z" fill="#98a8c0"/>
<path d="M0,42Q15,40 30,45T61,43V61H0Z" fill="#5a6a80"/>
<path d="M0,47Q20,43 40,49T61,48V61H0Z" fill="#8a6a58"/>
<path d="M0,52Q20,49 35,54T61,53V61H0Z" fill="#b08068"/>
<path d="M0,57Q25,54 61,58V61H0Z" fill="#6a5040"/>
<path d="M14,30Q22,27 28,31M36,26Q44,24 50,28M8,39Q16,36 22,40M40,40Q46,38 54,41" stroke="#e8eef4" stroke-width="1" fill="none" opacity="0.8"/>
<path d="M38,12V18L41,18Z" fill="#f0f0f0"/>
</g><circle cx="30.5" cy="30.5" r="30" fill="none" stroke="#b8b0b0" stroke-width="0.7"/></svg>
<div class="a" style="left:868px;top:194px;width:32px;height:32px;background:#f0832a"></div>
<svg style="left:874px;top:199px" width="20" height="21"><circle cx="10" cy="6.5" r="4.5" fill="#fff"/><path d="M1,20Q1,12 6,12L10,14.5L14,12Q19,12 19,20Z" fill="#fff"/></svg>
<div class="a" style="left:900px;top:194px;width:58px;height:32px;background:rgba(28,22,24,0.78)"></div>
<svg style="left:906px;top:201px" width="16" height="18"><rect x="5" y="0.5" width="6" height="10" rx="3" fill="#fff"/><path d="M2,8Q2,14 8,14Q14,14 14,8" fill="none" stroke="#fff" stroke-width="1.6"/><path d="M8,14V17.5" stroke="#fff" stroke-width="1.6"/></svg>
<div class="t" style="left:928.5px;top:210px;color:#fff;font-size:12.2px">尚扬</div>
<!-- mic mute circle -->
<div class="a" style="left:889px;top:366.5px;width:60.5px;height:61px;border-radius:50%;background:rgba(70,70,70,0.68)"></div>
<div class="a" style="left:927px;top:368px;width:5px;height:34px;background:rgba(20,20,20,0.35)"></div>
<svg style="left:903px;top:378px" width="32" height="46">
 <rect x="11" y="1.5" width="11.5" height="23" rx="5.75" fill="#fff"/>
 <path d="M6,17Q6,28 16.75,28Q27.5,28 27.5,17" fill="none" stroke="#fff" stroke-width="2.4"/>
 <path d="M16.75,28V33 M10,34H23.5" stroke="#fff" stroke-width="2.4"/>
 <path d="M3,32L30,5.5" stroke="#e07878" stroke-width="2.6"/>
 <circle cx="10.5" cy="41.5" r="1" fill="#2a4a90"/><circle cx="15" cy="43.5" r="1" fill="#555"/><circle cx="19" cy="43.5" r="1" fill="#555"/><circle cx="23" cy="43.5" r="1" fill="#555"/>
</svg>

</body></html>
